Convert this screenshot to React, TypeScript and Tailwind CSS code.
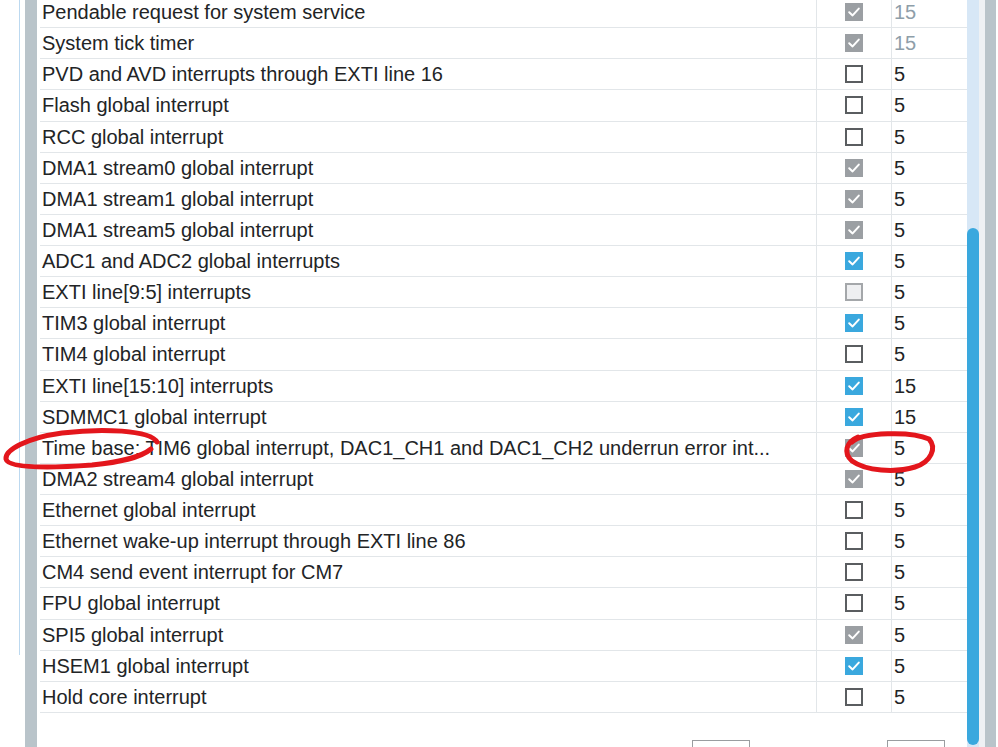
import React from 'react';

type Box = 'gray' | 'blue' | 'off' | 'dis';

interface Row {
  name: string;
  box: Box;
  prio: string;
  dim?: boolean;
}

const ROWS: Row[] = [
  { name: 'Pendable request for system service', box: 'gray', prio: '15', dim: true },
  { name: 'System tick timer', box: 'gray', prio: '15', dim: true },
  { name: 'PVD and AVD interrupts through EXTI line 16', box: 'off', prio: '5' },
  { name: 'Flash global interrupt', box: 'off', prio: '5' },
  { name: 'RCC global interrupt', box: 'off', prio: '5' },
  { name: 'DMA1 stream0 global interrupt', box: 'gray', prio: '5' },
  { name: 'DMA1 stream1 global interrupt', box: 'gray', prio: '5' },
  { name: 'DMA1 stream5 global interrupt', box: 'gray', prio: '5' },
  { name: 'ADC1 and ADC2 global interrupts', box: 'blue', prio: '5' },
  { name: 'EXTI line[9:5] interrupts', box: 'dis', prio: '5' },
  { name: 'TIM3 global interrupt', box: 'blue', prio: '5' },
  { name: 'TIM4 global interrupt', box: 'off', prio: '5' },
  { name: 'EXTI line[15:10] interrupts', box: 'blue', prio: '15' },
  { name: 'SDMMC1 global interrupt', box: 'blue', prio: '15' },
  { name: 'Time base: TIM6 global interrupt, DAC1_CH1 and DAC1_CH2 underrun error int...', box: 'gray', prio: '5' },
  { name: 'DMA2 stream4 global interrupt', box: 'gray', prio: '5' },
  { name: 'Ethernet global interrupt', box: 'off', prio: '5' },
  { name: 'Ethernet wake-up interrupt through EXTI line 86', box: 'off', prio: '5' },
  { name: 'CM4 send event interrupt for CM7', box: 'off', prio: '5' },
  { name: 'FPU global interrupt', box: 'off', prio: '5' },
  { name: 'SPI5 global interrupt', box: 'gray', prio: '5' },
  { name: 'HSEM1 global interrupt', box: 'blue', prio: '5' },
  { name: 'Hold core interrupt', box: 'off', prio: '5' },
];

const Check = () => (
  <svg viewBox="0 0 18 18" className="w-[18px] h-[18px]">
    <path d="M4.2 9.2 L7.6 12.4 L13.8 5.6" fill="none" stroke="white" strokeWidth="2" strokeLinecap="round" strokeLinejoin="round" />
  </svg>
);

const CheckBox: React.FC<{ kind: Box }> = ({ kind }) => {
  if (kind === 'gray') return <div className="w-[18px] h-[18px] bg-[#9b9fa3]"><Check /></div>;
  if (kind === 'blue') return <div className="w-[18px] h-[18px] bg-[#3aa8de]"><Check /></div>;
  if (kind === 'dis') return <div className="w-[18px] h-[18px] bg-[#eeeff1] border-2 border-[#a4a7aa]" />;
  return <div className="w-[18px] h-[18px] bg-white border-2 border-[#5a5d60]" />;
};

export default function App() {
  return (
    <div className="relative w-[998px] h-[747px] overflow-hidden bg-white flex" style={{ fontFamily: '"Liberation Sans", Arial, sans-serif' }}>
      {/* left gutter */}
      <div className="w-[19px] shrink-0" />
      <div className="w-px h-[655px] shrink-0 bg-[#bcd9f0]" />
      <div className="w-[5px] shrink-0" />
      <div className="w-[12px] shrink-0 bg-[#b9c4ca]" />
      <div className="w-[3px] shrink-0" />

      {/* table */}
      <div className="flex-1 flex flex-col">
        <div className="-mt-[3px]">
          {ROWS.map((r, i) => (
            <div key={i} className="flex h-[31.14px] border-b border-[#e2e6e9] text-[20px] text-[#222426]">
              <div className="flex-1 flex items-center pl-[2px] whitespace-nowrap overflow-hidden">{r.name}</div>
              <div className="w-[75px] shrink-0 border-l border-[#e2e6e9] flex items-center justify-center pr-[1px]">
                <CheckBox kind={r.box} />
              </div>
              <div className={`w-[76px] shrink-0 border-l border-[#e2e6e9] flex items-center pl-[2px] ${r.dim ? 'text-[#8e9ea9]' : ''}`}>
                {r.prio}
              </div>
            </div>
          ))}
        </div>
        <div className="flex pl-[652px] gap-[137px] mt-[27px]">
          <div className="w-[58px] h-[30px] border border-[#9a9da0] bg-white" />
          <div className="w-[58px] h-[30px] border border-[#9a9da0] bg-white" />
        </div>
      </div>

      {/* scrollbar */}
      <div className="w-[12px] shrink-0 bg-[#d7e7f6] flex flex-col">
        <div className="h-[228px]" />
        <div className="h-[517px] rounded-full bg-[#3aa8de]" />
      </div>
      <div className="w-[6px] shrink-0 bg-[#eef1f4]" />
      <div className="w-[11px] shrink-0 bg-[#b9c4ca]" />
      <div className="w-[2px] shrink-0 bg-white" />

      {/* hand-drawn red marks */}
      <svg className="absolute inset-0 pointer-events-none" width="998" height="747">
        <path d="M157 442 C150 430, 102 428, 62 433 C26 438, 5 450, 6 459 C8 469, 52 468, 92 465 C120 462, 140 458, 151 449"
          fill="none" stroke="#e3161c" strokeWidth="5" strokeLinecap="round" />
        <path d="M852 442 C862 432, 912 431, 929 439 C937 448, 931 462, 915 467 C895 473, 866 471, 852 461 C843 453, 846 442, 858 437"
          fill="none" stroke="#e3161c" strokeWidth="5" strokeLinecap="round" />
      </svg>
    </div>
  );
}
